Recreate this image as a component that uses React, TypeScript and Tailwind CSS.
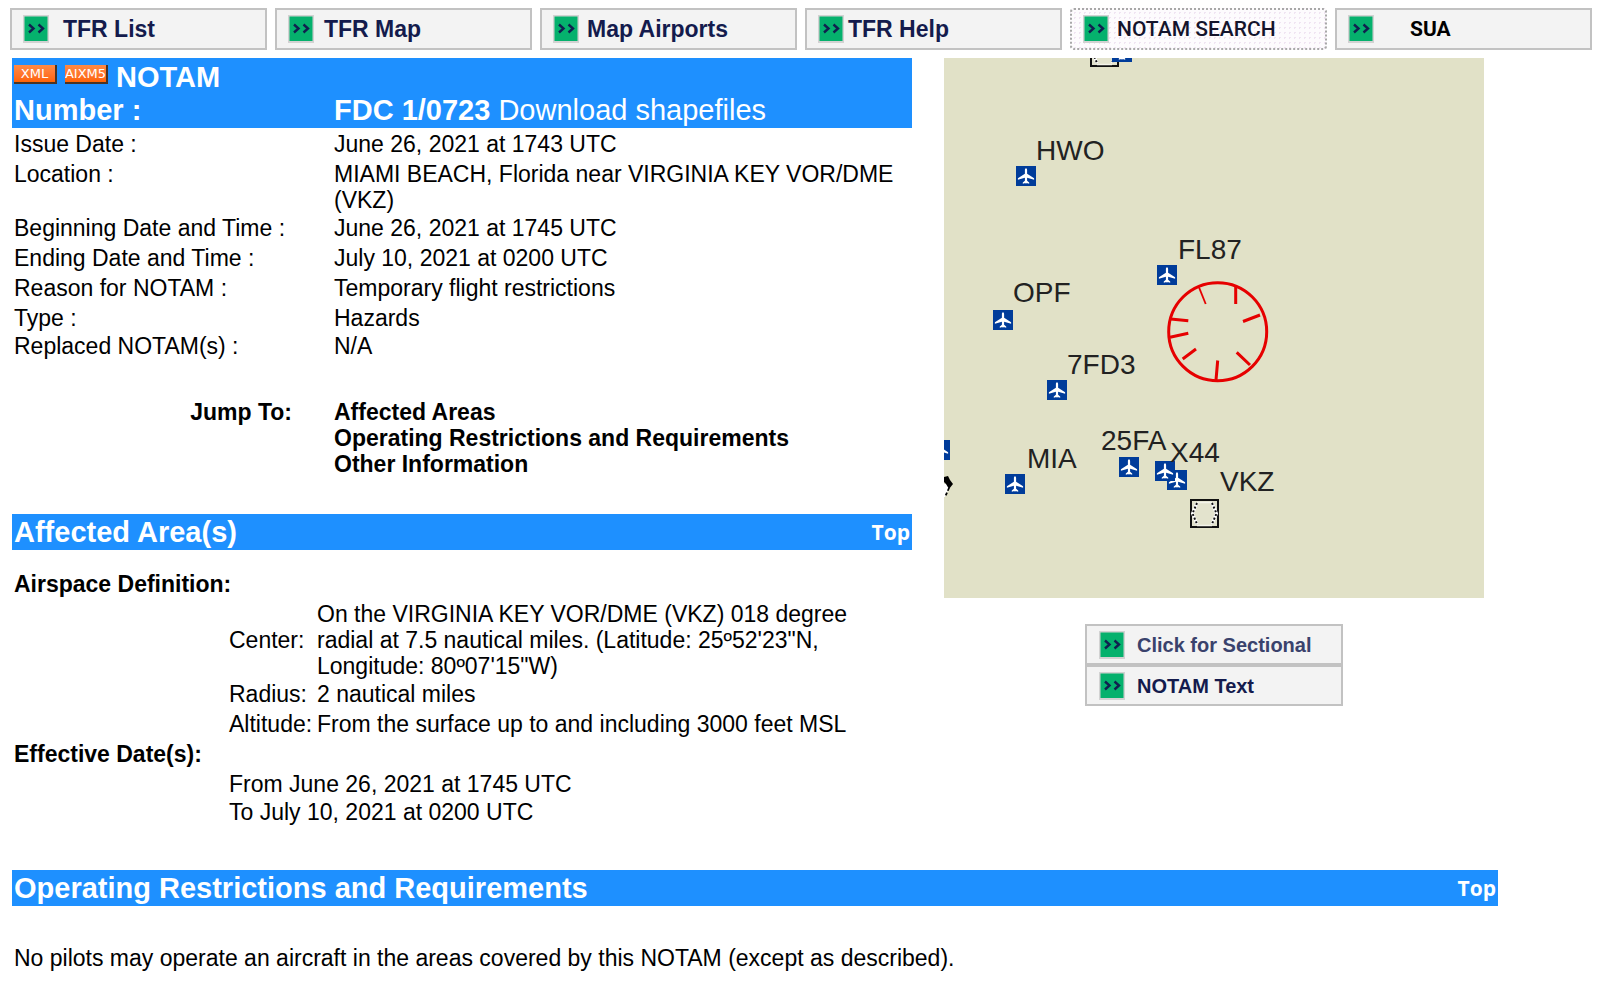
import type { ReactNode } from "react";

const NAV_ITEMS = [
  { label: "TFR List", gap: "gap-3.5", text: "text-[23px] font-bold text-[#141b4d]" },
  { label: "TFR Map", gap: "gap-2.5", text: "text-[23px] font-bold text-[#141b4d]" },
  { label: "Map Airports", gap: "gap-2", text: "text-[23px] font-bold text-[#141b4d]" },
  { label: "TFR Help", gap: "gap-1", text: "text-[23px] font-bold text-[#141b4d]" },
  {
    label: "NOTAM SEARCH",
    gap: "gap-2",
    text: "text-[21px] font-medium text-[#14142c] font-[Roboto,sans-serif]",
    dotted: true,
  },
  { label: "SUA", gap: "gap-9", text: "text-[21px] font-bold text-black font-[Roboto,sans-serif]" },
];

const DETAILS = [
  { label: "Issue Date :", value: "June 26, 2021 at 1743 UTC" },
  { label: "Location :", value: "MIAMI BEACH, Florida near VIRGINIA KEY VOR/DME (VKZ)" },
  { label: "Beginning Date and Time :", value: "June 26, 2021 at 1745 UTC", tight: true },
  { label: "Ending Date and Time :", value: "July 10, 2021 at 0200 UTC" },
  { label: "Reason for NOTAM :", value: "Temporary flight restrictions" },
  { label: "Type :", value: "Hazards" },
  { label: "Replaced NOTAM(s) :", value: "N/A", tight: true },
];

const AIRPORTS = [
  { x: 168, y: -16 },
  { x: 72, y: 108 },
  { x: 213, y: 207 },
  { x: 49, y: 252 },
  { x: 103, y: 322 },
  { x: 61, y: 416 },
  { x: 175, y: 399 },
  { x: 223, y: 412 },
  { x: 211, y: 403 },
  { x: -14, y: 382 },
];

const MAP_LABELS = [
  { name: "HWO", x: 92, y: 102 },
  { name: "FL87", x: 234, y: 201 },
  { name: "OPF", x: 69, y: 244 },
  { name: "7FD3", x: 123, y: 316 },
  { name: "MIA", x: 83, y: 410 },
  { name: "25FA", x: 157, y: 392 },
  { name: "X44", x: 226, y: 404 },
  { name: "VKZ", x: 276, y: 433 },
];

function ArrowBadge() {
  return (
    <svg viewBox="0 0 26 28" className="h-7 w-[26px] shrink-0" aria-hidden="true">
      <rect width="26" height="28" fill="#d2d2d2" />
      <rect x="1.5" y="1.5" width="23" height="24.5" fill="#05b16d" />
      <path d="M6 9.5l4.5 4L6 17.5M15.5 9.5l4.5 4-4.5 4" fill="none" stroke="#10204f" strokeWidth="2.4" />
    </svg>
  );
}

function Tag({ children }: { children: ReactNode }) {
  return (
    <a
      href="#"
      className="mt-1 flex h-[19px] w-[43px] items-center justify-center border-r-2 border-b-2 border-[#4a3424] bg-linear-to-b from-[#ff8a45] to-[#ff6200] font-['DejaVu_Sans',sans-serif] text-[13px] leading-none font-normal text-white"
    >
      {children}
    </a>
  );
}

function SectionBar({ title }: { title: string }) {
  return (
    <div className="flex items-center justify-between bg-[#1e90ff] px-[2px] py-[2px] text-white">
      <h2 className="text-[29px] leading-8 font-bold">{title}</h2>
      <a href="#top" className="font-['Open_Sans',sans-serif] text-[21px] leading-8 font-bold">
        Top
      </a>
    </div>
  );
}

// square symbol with the dotted hexagon inside
function VorSymbol({ x, y }: { x: number; y: number }) {
  return (
    <g transform={`translate(${x} ${y})`}>
      <rect x="1" y="1" width="27" height="27" fill="#e3e3cd" stroke="#111" strokeWidth="2" />
      <path d="M7 3.5H22M7 26.5H22" stroke="#f4f4ea" strokeWidth="1.5" />
      <path d="M7 4L2.5 14.5 7 25M22 4l4.5 10.5L22 25" fill="none" stroke="#fff" strokeWidth="3" />
      <path d="M7 4L2.5 14.5 7 25M22 4l4.5 10.5L22 25" fill="none" stroke="#111" strokeWidth="2" strokeDasharray="2 2" />
    </g>
  );
}

function AreaMap() {
  return (
    <svg viewBox="0 0 540 540" className="block w-full bg-[#e1e1c7]" role="img" aria-label="Affected area map">
      <VorSymbol x={146} y={-20} />
      {AIRPORTS.map(({ x, y }) => (
        <g key={`${x}-${y}`} transform={`translate(${x} ${y})`}>
          <rect width="20" height="20" fill="#003c9a" />
          <path
            d="M10 2.2c.8 0 1.1 1 1.1 2v3.6l7 4.4v1.5l-7-1.9v3l2.1 1.6v1.3l-2.6-.6-.6.9-.6-.9-2.6.6v-1.3l2.1-1.6v-3l-7 1.9v-1.5l7-4.4V4.2c0-1 .3-2 1.1-2z"
            fill="#fff"
          />
        </g>
      ))}
      <path d="M0 426h4l1 4-4 9H0z" fill="#fff" />
      <path d="M0 419l4-1 2 4 3 4-4 5-3-5-2-2z" fill="#000" />
      <path d="M5 430l-4 9" stroke="#000" strokeWidth="1.8" strokeDasharray="3 2" />
      <g fill="none" stroke="#e60000" strokeWidth="3">
        <circle cx="273.7" cy="273.7" r="49" />
        <path d="M255 229.3l6.7 16.7" strokeWidth="1.8" />
        <path d="M291.7 228v18M316 257l-17 6.5M306 307l-13.3-12.7M272 322l1.7-19.5M238.7 301l13.3-10M226 279.3l18.3-4M226.7 261l17.6 1.7" />
      </g>
      <VorSymbol x={246} y={441} />
      <g fill="#222" fontFamily="'Liberation Sans', Arial, sans-serif" fontSize="28">
        {MAP_LABELS.map(({ name, x, y }) => (
          <text key={name} x={x} y={y}>
            {name}
          </text>
        ))}
      </g>
    </svg>
  );
}

export default function App() {
  return (
    <div
      id="top"
      className="bg-white pt-2 pb-2 font-['Liberation_Sans',Arial,sans-serif] text-[23px] leading-[26px] text-black"
    >
      <nav className="flex gap-2 pr-2 pl-[10px]">
        {NAV_ITEMS.map((item) => (
          <a
            key={item.label}
            href="#"
            className={`flex h-[42px] flex-1 items-center border-2 pl-[11px] whitespace-nowrap ${item.gap} ${item.text} ${
              item.dotted
                ? "rounded-sm border-dotted border-[#a8a8a8] bg-[#fdfbfd] bg-[radial-gradient(#f0e4f2_1px,transparent_1px)] bg-size-[5px_5px]"
                : "border-[#c2c2c2] bg-[#f3f3f3]"
            }`}
          >
            <ArrowBadge />
            {item.label}
          </a>
        ))}
      </nav>

      <main className="pt-2 pl-3">
        <div className="flex items-start gap-8">
          <div className="w-[900px]">
            <table className="w-full table-fixed border-collapse text-left align-top">
              <colgroup>
                <col className="w-80" />
                <col />
              </colgroup>
              <thead>
                <tr className="bg-[#1e90ff] text-[29px] leading-[33px] text-white">
                  <th className="px-[2px] pt-[3px] pb-px font-bold">
                    <span className="flex gap-2">
                      <Tag>XML</Tag>
                      <Tag>AIXM5</Tag>
                      <span>NOTAM</span>
                    </span>
                    Number :
                  </th>
                  <th className="px-[2px] pb-px align-bottom font-normal">
                    <b>FDC 1/0723</b> <a href="#">Download shapefiles</a>
                  </th>
                </tr>
              </thead>
              <tbody>
                {DETAILS.map(({ label, value, tight }) => (
                  <tr key={label} className="align-top">
                    <th className={`px-[2px] pb-px font-normal ${tight ? "pt-px" : "pt-[3px]"}`}>{label}</th>
                    <td className={`px-[2px] pb-px ${tight ? "pt-px" : "pt-[3px]"}`}>{value}</td>
                  </tr>
                ))}
              </tbody>
            </table>

            <div className="flex gap-[42px] pt-[39px] pb-[37px] font-bold">
              <span className="w-[280px] text-right">Jump To:</span>
              <div className="flex flex-col">
                <a href="#areas">Affected Areas</a>
                <a href="#restrictions">Operating Restrictions and Requirements</a>
                <a href="#other">Other Information</a>
              </div>
            </div>

            <section id="areas">
              <SectionBar title="Affected Area(s)" />
              <h3 className="px-[2px] pt-[21px] font-bold">Airspace Definition:</h3>
              <table className="mt-[2px] ml-[217px] w-[650px] table-fixed border-collapse text-left">
                <colgroup>
                  <col className="w-[88px]" />
                  <col />
                </colgroup>
                <tbody>
                  <tr>
                    <th className="pt-[2px] font-normal">Center:</th>
                    <td className="pt-[2px]">
                      On the VIRGINIA KEY VOR/DME (VKZ) 018 degree radial at 7.5 nautical miles. (Latitude: 25º52'23"N,
                      Longitude: 80º07'15"W)
                    </td>
                  </tr>
                  <tr>
                    <th className="py-[2px] font-normal">Radius:</th>
                    <td>2 nautical miles</td>
                  </tr>
                  <tr>
                    <th className="py-[2px] font-normal">Altitude:</th>
                    <td>From the surface up to and including 3000 feet MSL</td>
                  </tr>
                </tbody>
              </table>
              <h3 className="px-[2px] py-[2px] font-bold">Effective Date(s):</h3>
              <div className="flex flex-col gap-[2px] py-[2px] pl-[217px]">
                <p>From June 26, 2021 at 1745 UTC</p>
                <p>To July 10, 2021 at 0200 UTC</p>
              </div>
            </section>
          </div>

          <aside className="flex w-[540px] flex-col items-center gap-[26px]">
            <AreaMap />
            <div className="flex w-[258px] flex-col">
              <button
                type="button"
                className="flex h-[41px] items-center gap-3 border-2 border-[#c2c2c2] bg-[#f3f3f3] pl-3 text-xl font-bold text-[#3a426c]"
              >
                <ArrowBadge />
                Click for Sectional
              </button>
              <button
                type="button"
                className="flex h-[41px] items-center gap-3 border-2 border-[#c2c2c2] bg-[#f3f3f3] pl-3 text-xl font-bold text-[#141b4d]"
              >
                <ArrowBadge />
                NOTAM Text
              </button>
            </div>
          </aside>
        </div>

        <section id="restrictions" className="max-w-[1486px] pt-[43px]">
          <SectionBar title="Operating Restrictions and Requirements" />
          <p className="px-[2px] pt-[39px]">
            No pilots may operate an aircraft in the areas covered by this NOTAM (except as described).
          </p>
        </section>
      </main>
    </div>
  );
}
